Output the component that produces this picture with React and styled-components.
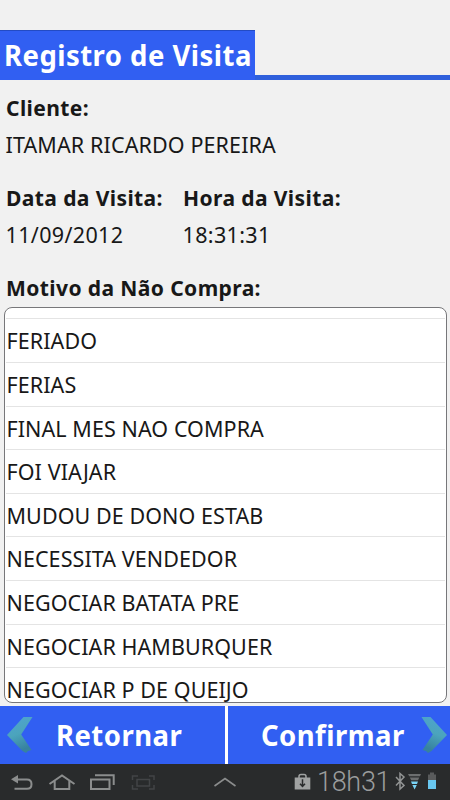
import styled, { createGlobalStyle } from "styled-components";

const reasons = [
  "FERIADO",
  "FERIAS",
  "FINAL MES NAO COMPRA",
  "FOI VIAJAR",
  "MUDOU DE DONO ESTAB",
  "NECESSITA VENDEDOR",
  "NEGOCIAR BATATA PRE",
  "NEGOCIAR HAMBURQUER",
  "NEGOCIAR P DE QUEIJO",
];

const Chevron = ({ flip }) => (
  <ChevronIcon viewBox="0 0 28 38" $flip={flip}>
    <defs>
      <linearGradient id="chevron" x1="0" y1="0" x2="0.3" y2="1">
        <stop offset="0" stopColor="#4fa3d4" />
        <stop offset="0.55" stopColor="#4ba4bc" />
        <stop offset="1" stopColor="#37829f" />
      </linearGradient>
    </defs>
    <path d="M17.5 1 H26.5 L15.2 18.5 L25.5 34 L22 35 L20 37 L16.5 35 L1 19 Z" fill="url(#chevron)" />
  </ChevronIcon>
);

const NavIcons = () => (
  <svg width="240" height="36" viewBox="0 764 240 36" fill="none" stroke="#8b8d8d" strokeWidth="2">
    <path d="M16 779.5 H27 Q31.5 779.5 31.5 784.2 Q31.5 788.8 27 788.8 H14.5" />
    <path d="M11 779.3 L18 775 V783.5 Z" fill="#8b8d8d" stroke="none" />
    <path d="M49.5 784 L62 775.5 L74.5 784 M54.7 781 V789 H69.3 V781" />
    <path d="M91 779.5 H109.5 V789 H91 Z M95 775.3 H113.7 V785" />
    <g stroke="#424446" strokeWidth="1.5">
      <path d="M132.5 780 V776 H138 M149 776 H154 V780 M132.5 785 V789 H138 M149 789 H154 V785" />
      <path d="M137 779.5 H149.5 V786 H137 Z" />
    </g>
    <path d="M214.5 786 L225 778.5 L235.5 786" strokeWidth="1.6" />
  </svg>
);

const BagIcon = () => (
  <svg width="17" height="18" viewBox="0 0 17 18">
    <path d="M5 5 V3.5 Q5 1.5 7 1.5 H10 Q12 1.5 12 3.5 V5" fill="none" stroke="#a0a2a2" strokeWidth="1.5" />
    <path d="M0.7 4.5 H16.3 V16.5 H0.7 Z" fill="#a0a2a2" />
    <path d="M8.5 6.2 V13 M6 10.8 L8.5 13.5 L11 10.8" fill="none" stroke="#292b2c" strokeWidth="1.5" />
  </svg>
);

const StatusIcons = () => (
  <svg width="44" height="20" viewBox="394 773 44 20">
    <path d="M396 778 L404 786.5 L400 790 V774.5 L404 778 L396 786.5" fill="none" stroke="#929494" strokeWidth="1.5" />
    <path d="M408 775 H421 L420 777.3 H409.2 Z M409.8 778.5 H419.3 L418 781.3 H411.2 Z" fill="#6c6e6f" />
    <path d="M411 782.5 H418 L417 785 H412 Z M412.4 786 H416.8 L414.6 790.5 Z" fill="#79d2f3" />
    <path d="M430 773.5 H434 V775.5 H436 V781 H428 V775.5 H430 Z" fill="#595b5c" />
    <path d="M428 781 H436 V790 H428 Z" fill="#68c7f0" />
  </svg>
);

const App = () => {
  return (
    <Screen>
      <GlobalStyle />
      <Header>
        <Title>
          <Text>Registro de Visita</Text>
        </Title>
      </Header>
      <Details>
        <Field>
          <Label>Cliente:</Label>
          <Value>ITAMAR RICARDO PEREIRA</Value>
        </Field>
        <FieldRow>
          <Field>
            <Label>Data da Visita:</Label>
            <Value $spacing={0.35}>11/09/2012</Value>
          </Field>
          <Field>
            <Label>Hora da Visita:</Label>
            <Value $spacing={0.35}>18:31:31</Value>
          </Field>
        </FieldRow>
        <Label>Motivo da Não Compra:</Label>
      </Details>
      <List>
        {reasons.map((reason) => (
          <Item key={reason}>{reason}</Item>
        ))}
      </List>
      <Actions>
        <Action>
          <Chevron />
          <Text $origin="right">Retornar</Text>
        </Action>
        <Action $end>
          <Text>Confirmar</Text>
          <Chevron flip />
        </Action>
      </Actions>
      <SystemBar>
        <NavIcons />
        <Status>
          <BagIcon />
          <Clock>18h31</Clock>
          <StatusIcons />
        </Status>
      </SystemBar>
    </Screen>
  );
};

const GlobalStyle = createGlobalStyle`
  * {
    box-sizing: border-box;
  }

  body {
    margin: 0;
    font-family: "Noto Sans", "Open Sans", sans-serif;
    color: #181818;
  }
`;

const Screen = styled.main`
  width: 450px;
  height: 800px;
  display: flex;
  flex-direction: column;
  overflow: hidden;
  background: #f1f1f1;
`;

const Header = styled.header`
  height: 80px;
  padding-top: 30px;
  flex-shrink: 0;
  background: linear-gradient(#2f60dc, #2f60dc) bottom / 100% 5px no-repeat;
`;

const Title = styled.h1`
  width: 255px;
  height: 50px;
  margin: 0;
  padding: 0 0 2px 4px;
  display: flex;
  align-items: center;
  background: #315ff2;
  border-top: 1px solid #234bc4;
  white-space: nowrap;
`;

// the bold face is slightly condensed
const Text = styled.span`
  font-size: 29px;
  font-weight: 700;
  line-height: 40px;
  letter-spacing: 0.5px;
  color: #fff;
  transform: scaleX(0.948);
  transform-origin: ${({ $origin = "left" }) => $origin};
`;

const Details = styled.section`
  height: 227px;
  flex-shrink: 0;
  padding: 10px 5.5px 0;
  display: flex;
  flex-direction: column;
  gap: 18px;
`;

const Field = styled.div`
  display: flex;
  flex-direction: column;
`;

const FieldRow = styled.div`
  display: grid;
  grid-template-columns: 177px 1fr;
`;

const Label = styled.span`
  height: 36px;
  font-size: 22px;
  font-weight: 700;
  line-height: 35px;
  letter-spacing: 0.4px;
  white-space: nowrap;
  transform: scaleX(0.957);
  transform-origin: left;
`;

const Value = styled.span`
  height: 36px;
  font-size: 21.5px;
  line-height: 38px;
  letter-spacing: ${({ $spacing = 0.12 }) => $spacing}px;
`;

const List = styled.ul`
  width: 443px;
  height: 396px;
  flex-shrink: 0;
  margin: 0 0 0 4px;
  padding: 10.4px 1px 0;
  list-style: none;
  overflow: hidden;
  background: #fff;
  border: 1px solid #77777a;
  border-radius: 8px;
`;

const Item = styled.li`
  height: 43.62px;
  padding-left: 0.5px;
  border-top: 1px solid #e4e4e4;
  font-size: 21.5px;
  line-height: 43px;
  letter-spacing: 0.08px;
  white-space: nowrap;
`;

const Actions = styled.div`
  height: 58px;
  margin-top: 3px;
  flex-shrink: 0;
  display: grid;
  grid-template-columns: 225px 222px;
  gap: 3px;
  background: #fff;
`;

const Action = styled.button`
  border: 0;
  padding: ${({ $end }) => ($end ? "0 2px 0 33px" : "0 43px 0 6px")};
  display: flex;
  align-items: center;
  justify-content: space-between;
  background: #315ff2;
  font-family: inherit;
`;

const ChevronIcon = styled.svg`
  width: 28px;
  height: 38px;
  flex-shrink: 0;
  transform: ${({ $flip }) => ($flip ? "scaleX(-1)" : "none")};
`;

const SystemBar = styled.footer`
  height: 36px;
  flex-shrink: 0;
  display: flex;
  justify-content: space-between;
  background: #292b2c;
`;

const Status = styled.div`
  display: flex;
  align-items: center;
  padding-right: 12px;
`;

const Clock = styled.span`
  width: 77px;
  margin-left: 6px;
  font-family: Roboto, Inter, sans-serif;
  font-weight: 300;
  font-size: 27px;
  letter-spacing: -0.3px;
  line-height: 36px;
  color: #9b9d9d;
`;

export default App;
